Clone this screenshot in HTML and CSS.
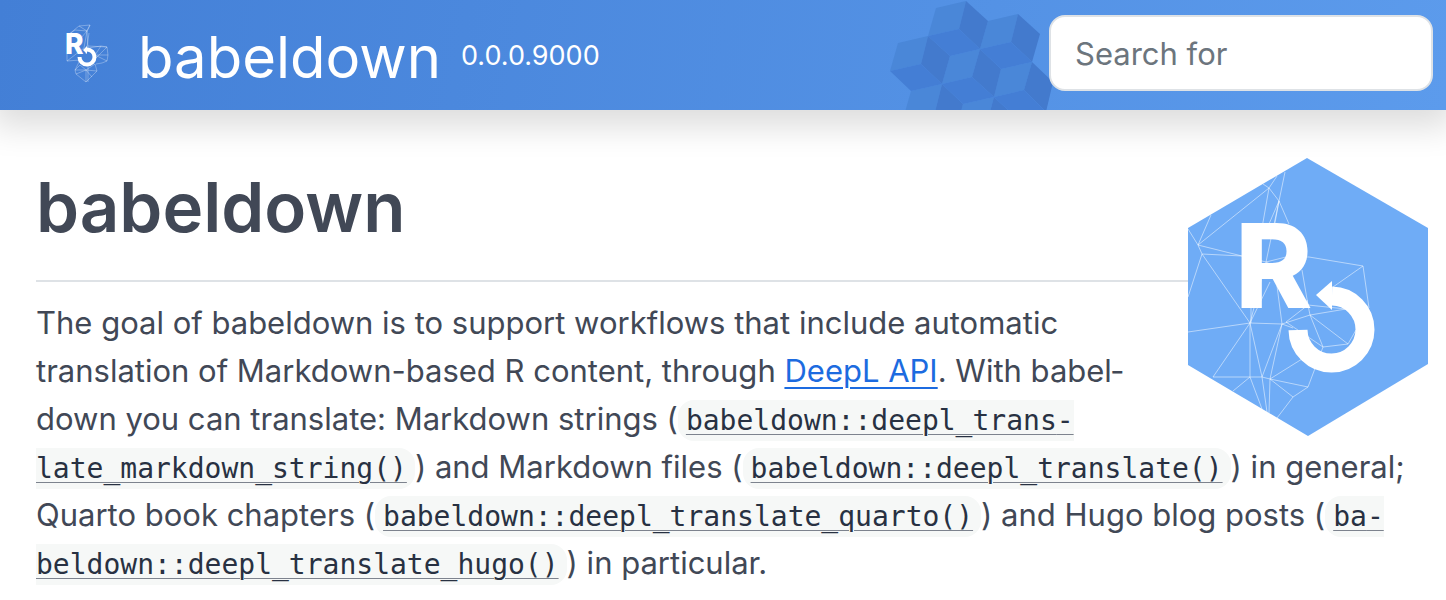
FILE: index.html
```html
<!DOCTYPE html>
<html lang="en">
<head>
<meta charset="utf-8">
<title>babeldown</title>
<link rel="stylesheet" href="styles.css">
</head>
<body>
<header class="navbar">
  <svg class="cubes" viewBox="0 0 170 110" aria-hidden="true">
    <g class="cube-light">
      <path d="M46 8 76 1 69 29 38 36Z"/>
      <path d="M98 21 128 14 121 42 90 49Z"/>
      <path d="M8 43 38 36 31 64 0 71Z"/>
      <path d="M60 56 90 49 82 77 52 84Z"/>
      <path d="M111 69 142 62 134 90 104 97Z"/>
      <path d="M21 91 52 84 45 112 15 112Z"/>
      <path d="M73 104 104 97 100 112 71 112Z"/>
    </g>
    <g class="cube-dark">
      <path d="M76 1 98 21 90 49 69 29Z"/>
      <path d="M128 14 150 34 142 62 121 42Z"/>
      <path d="M38 36 60 56 52 84 31 64Z"/>
      <path d="M90 49 111 69 104 97 82 77Z"/>
      <path d="M142 62 163 82 156 112 134 90Z"/>
      <path d="M52 84 73 104 71 112 45 112Z"/>
      <path d="M104 97 120 112 100 112Z"/>
    </g>
    <g class="cube-mid">
      <path d="M38 36 69 29 90 49 60 56Z"/>
      <path d="M90 49 121 42 142 62 111 69Z"/>
      <path d="M0 71 31 64 52 84 21 91Z"/>
      <path d="M52 84 82 77 104 97 73 104Z"/>
      <path d="M104 97 134 90 156 112 120 112Z"/>
    </g>
  </svg>
  <a class="brand" href="#">
    <svg class="brand-logo" viewBox="0 0 44 62" aria-hidden="true">
      <path class="brand-mesh" d="M2 11 13 2 24 1 21 7 9 6 2 11M13 2 21 7 22 24 35 22 41 23 42 31 41 37 36 39 30 40M24 1 21 7 18 24 1 37 14 36M21 7 15 14M23 9 20 30M41 23 30 34M35 22 29 31 41 37M42 31H30M22 22 41 23M1 30V37M14 36 9 46 10 50 20 58 31 47 29 40 20 46 9 46 14 41 20 46 20 58M10 50 20 46 31 47M20 46 26 53M22 58 22 42"/>
      <text class="brand-r" x="-1" y="30">R</text>
      <path class="brand-arc" d="M13.500 33A7.500 7.500 0 1 0 21 25.500"/>
      <path class="logo-fill" d="M17 26 21 22V30Z"/>
    </svg>
    <span class="brand-name">babeldown</span>
  </a>
  <span class="version">0.0.0.9000</span>
  <form class="search"><input class="search-input" type="search" placeholder="Search for" aria-label="Search for"></form>
</header>
<main class="content">
  <svg class="hex" viewBox="0 0 240 278" role="img" aria-label="babeldown logo">
    <path class="hex-fill" d="M119 0 240 70V206L120 278 0 207V70Z"/>
    <path class="hex-mesh" d="M75 26 81 30 89 18M81 30 10 87 23 57M81 30 91 43 97 14M81 30 74 70M91 43 101 66M91 43 81 66M91 43 78 104M91 43 86 70M0 71 10 87 14 96 0 139M10 87 78 104M14 96 54 98M14 96 62 165 0 174M78 104 98 99 121 99 175 108 145 129M175 108 181 150M78 104 90 110M114 112 120 147 158 151M120 147 98 164M78 104 62 165M62 165V219M62 165 25 219H74L82 221M62 165 74 219M62 165 94 166 89 128M62 165 82 124M63 149V165M94 166 74 219M94 166 82 221M94 166 122 157 119 142M94 166 105 170M122 157 158 151M122 157 135 189 98 164M122 157 160 186 135 189M160 186 168 172M135 189 120 229 82 221 114 201M82 221 105 239 120 229M105 239 89 260M82 221 81 255M74 219 79 254M62 219 74 251M62 219 45 233"/>
    <text class="hex-r" x="47" y="150">R</text>
    <path class="hex-arc" d="M110 172A33.500 33.500 0 1 0 144 138"/>
    <path class="logo-fill" d="M128 137 144 123V152Z"/>
  </svg>
  <h1 class="title">babeldown</h1>
  <p class="lead">The goal of babeldown is to support workflows that include automatic translation of Markdown-based R content, through <a class="link" href="#">DeepL API</a>. With babel&shy;down you can translate: Markdown strings (<code><a href="#">babeldown::deepl_trans&shy;late_markdown_string()</a></code>) and Markdown files (<code><a href="#">babeldown::deepl_translate()</a></code>) in general; Quarto book chapters (<code><a href="#">babeldown::deepl_translate_quarto()</a></code>) and Hugo blog posts (<code><a href="#">ba&shy;beldown::deepl_translate_hugo()</a></code>) in particular.</p>
</main>
</body>
</html>
```
FILE: styles.css
```css
* { box-sizing: border-box; }
body {
  margin: 0;
  background: #fff;
  color: #414856;
  font-family: Inter, "Liberation Sans", sans-serif;
  font-size: 31px;
  line-height: 48px;
}
.navbar {
  position: relative;
  display: flex;
  align-items: center;
  height: 110px;
  padding: 0 13px 0 66px;
  background: linear-gradient(100deg, #437fd6, #5c9bec);
  box-shadow: 0 8px 32px 8px rgba(0, 0, 0, .14);
  color: #fff;
}
.cubes {
  position: absolute;
  top: 0;
  right: 386px;
  width: 170px;
  height: 110px;
}
.cube-light { fill: #4a87d8; }
.cube-mid { fill: #447ed5; }
.cube-dark { fill: #437acd; }
.brand {
  display: flex;
  align-items: center;
  gap: 28px;
  color: #fff;
  text-decoration: none;
}
.brand-logo { width: 44px; height: 62px; overflow: visible; }
.brand-mesh { fill: none; stroke: #fff; stroke-width: .6; opacity: .5; }
.brand-r { font-size: 28px; font-weight: 800; fill: #fff; }
.brand-arc { fill: none; stroke: #fff; stroke-width: 4; }
.logo-fill { fill: #fff; }
.brand-name { padding-top: 4px; font-size: 58px; line-height: 72px; }
.version { margin-left: 20px; padding-top: 2px; font-size: 27px; }
.search { position: relative; margin: 0 0 4px auto; }
.search-input {
  display: block;
  width: 384px;
  height: 76px;
  padding: 0 24px;
  border: 2px solid #dee2e6;
  border-radius: 16px;
  background: #fff;
  color: #414856;
  font: inherit;
}
.search-input::placeholder { color: #6c757d; opacity: 1; }
.content { padding: 48px 18px 12px 36px; }
.hex {
  float: right;
  position: relative;
  width: 240px;
  height: 278px;
  margin-left: 32px;
}
.hex-fill { fill: #6facf6; }
.hex-mesh { fill: none; stroke: #fff; stroke-width: 1; opacity: .5; }
.hex-r { font-size: 117px; font-weight: 800; fill: #fff; }
.hex-arc { fill: none; stroke: #fff; stroke-width: 19; }
.title {
  margin: 0 0 17px;
  padding: 5px 0 29px;
  border-bottom: 2px solid #dee2e6;
  font-size: 69px;
  font-weight: 600;
  line-height: 88px;
}
.lead { margin: 0; }
.link { color: #1c6be0; text-decoration-thickness: 2px; text-underline-offset: 5px; }
code {
  padding: 4px 8px;
  border-radius: 16px;
  background: #f6f8f7;
  font-family: "DejaVu Sans Mono", monospace;
  font-size: 28px;
  line-height: 32px;
}
code a {
  color: #283142;
  text-decoration-color: #7d838e;
  text-decoration-thickness: 1px;
  text-underline-offset: 4px;
}
```
